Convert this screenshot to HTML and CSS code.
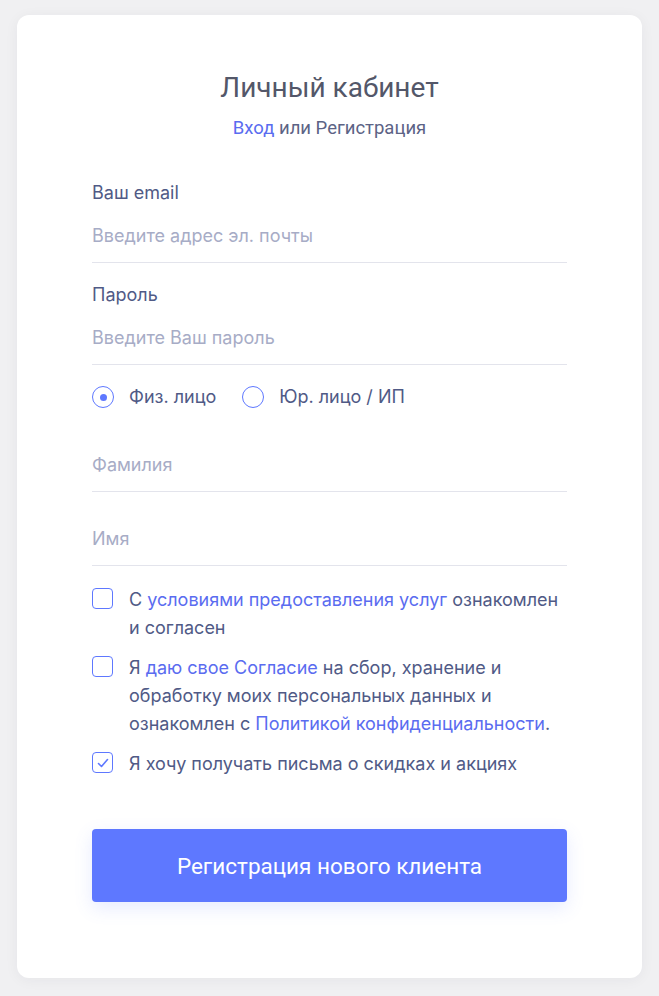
FILE: index.html
```html
<!DOCTYPE html>
<html lang="ru">
<head>
    <meta charset="UTF-8">
    <meta name="viewport" content="width=device-width, initial-scale=1.0">
    <title>Личный кабинет</title>
    <link rel="stylesheet" href="styles.css">
</head>
<body>
    <div class="card">
        <h1 class="title">Личный кабинет</h1>
        <div class="subtitle"><a href="#">Вход</a> или Регистрация</div>

        <form class="form">
            <div class="field">
                <label class="label">Ваш email</label>
                <input class="input" type="text" placeholder="Введите адрес эл. почты">
            </div>
            <div class="field">
                <label class="label">Пароль</label>
                <input class="input" type="password" placeholder="Введите Ваш пароль">
            </div>

            <div class="radios">
                <label class="radio">
                    <span class="radio-mark checked"></span>
                    Физ. лицо
                </label>
                <label class="radio">
                    <span class="radio-mark"></span>
                    Юр. лицо / ИП
                </label>
            </div>

            <div class="field plain">
                <input class="input" type="text" placeholder="Фамилия">
            </div>
            <div class="field plain next">
                <input class="input" type="text" placeholder="Имя">
            </div>

            <div class="checks">
                <label class="check">
                    <span class="box"></span>
                    <span>С <a href="#">условиями предоставления услуг</a> ознакомлен и согласен</span>
                </label>
                <label class="check">
                    <span class="box"></span>
                    <span>Я <a href="#">даю свое Согласие</a> на сбор, хранение и обработку моих персональных данных и ознакомлен с <a href="#">Политикой конфиденциальности</a>.</span>
                </label>
                <label class="check">
                    <span class="box">
                        <svg width="14" height="14" viewBox="0 0 14 14"><polyline points="2.5,7.5 5.5,10.5 11.5,3.5" fill="none" stroke="#5e78ff" stroke-width="1.6" stroke-linecap="round" stroke-linejoin="round"/></svg>
                    </span>
                    <span>Я хочу получать письма о скидках и акциях</span>
                </label>
            </div>

            <button class="submit" type="button">Регистрация нового клиента</button>
        </form>
    </div>
</body>
</html>
```

FILE: styles.css
```css
body {
    margin: 0;
    padding: 15px 17px 19px;
    background-color: #f0f0f2;
    font-family: Inter, "Noto Sans", sans-serif;
    color: #505a86;
}

a {
    color: #5a6cf0;
    text-decoration: none;
}

.card {
    background-color: #fff;
    border-radius: 12px;
    box-shadow: 0 2px 14px rgba(30, 35, 60, 0.05);
    padding: 57px 75px 76px;
}

.title {
    margin: 0;
    font-family: Roboto, sans-serif;
    font-weight: 400;
    font-size: 28px;
    line-height: 32px;
    color: #535769;
    text-align: center;
}

.subtitle {
    margin-top: 12px;
    font-family: Roboto, sans-serif;
    font-size: 18.5px;
    line-height: 24px;
    color: #5c6385;
    text-align: center;
}

.form {
    margin-top: 41px;
}

.field {
    display: flex;
    flex-direction: column;
}

.field + .field {
    margin-top: 20px;
}

.field.next {
    margin-top: 16px;
}

.label {
    font-size: 18px;
    line-height: 24px;
    color: #505a86;
}

.input {
    border: 0;
    border-bottom: 1px solid #e3e4ec;
    padding: 19px 0 14px;
    font-family: Inter, sans-serif;
    font-size: 18px;
    line-height: 24px;
    color: #505a86;
    outline: none;
    background: transparent;
}

.input::placeholder {
    color: #a7acc6;
}

.radios {
    display: flex;
    gap: 26px;
    margin: 21px 0 26px;
}

.radio {
    display: flex;
    align-items: center;
    gap: 15px;
    font-size: 18px;
    line-height: 22px;
    color: #505a86;
}

.radio-mark {
    width: 20px;
    height: 20px;
    border: 1.5px solid #5e78ff;
    border-radius: 50%;
    display: flex;
    align-items: center;
    justify-content: center;
}

.radio-mark.checked:after {
    content: "";
    width: 7px;
    height: 7px;
    border-radius: 50%;
    background-color: #5e78ff;
}

.checks {
    display: flex;
    flex-direction: column;
    gap: 12px;
    margin-top: 20px;
}

.check {
    display: flex;
    align-items: flex-start;
    gap: 16px;
    font-size: 18px;
    line-height: 28px;
    color: #505a86;
}

.box {
    flex: none;
    width: 19px;
    height: 19px;
    margin-top: 2px;
    border: 1.5px solid #5e78ff;
    border-radius: 4px;
    display: flex;
    align-items: center;
    justify-content: center;
}

.submit {
    display: block;
    width: 100%;
    height: 73px;
    margin-top: 51px;
    border: 0;
    border-radius: 4px;
    background-color: #5e78ff;
    box-shadow: 0 6px 18px rgba(94, 120, 255, 0.15);
    color: #fff;
    font-family: Roboto, sans-serif;
    font-size: 22.5px;
    cursor: pointer;
}
```
